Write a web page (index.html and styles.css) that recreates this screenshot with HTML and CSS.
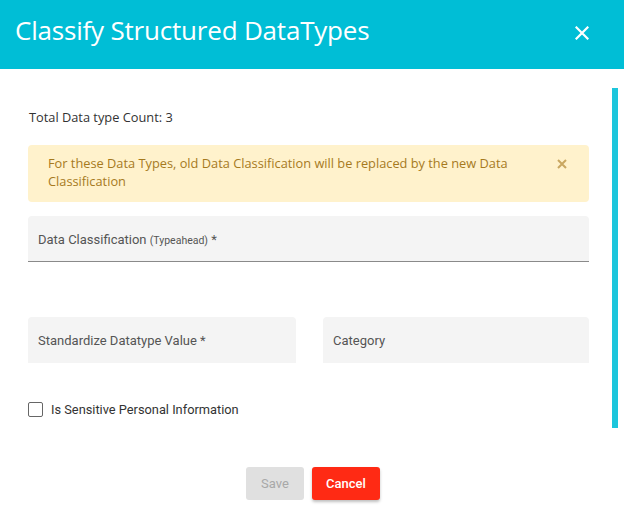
FILE: index.html
```html
<!DOCTYPE html>
<html>
<head>
<meta charset="utf-8">
<link rel="stylesheet" href="styles.css">
</head>
<body>
<div class="dialog">
  <header class="header">
    <h1 class="title">Classify Structured DataTypes</h1>
    <svg class="close" width="14" height="14" viewBox="0 0 14 14"><path d="M1.5 1.5L12.5 12.5M12.5 1.5L1.5 12.5" stroke="#fff" stroke-width="2.2" stroke-linecap="square"/></svg>
  </header>
  <main class="body">
    <div class="scrollbar"></div>
    <p class="count">Total Data type Count: 3</p>
    <div class="alert">
      <span class="alert-text">For these Data Types, old Data Classification will be replaced by the new Data Classification</span>
      <svg class="alert-close" width="10" height="10" viewBox="0 0 10 10"><path d="M1 1L9 9M9 1L1 9" stroke="#c9a760" stroke-width="2"/></svg>
    </div>
    <div class="field field-underline">
      <span class="label">Data Classification <small>(Typeahead)</small> *</span>
    </div>
    <div class="row">
      <div class="field"><span class="label">Standardize Datatype Value *</span></div>
      <div class="field"><span class="label">Category</span></div>
    </div>
    <label class="check">
      <span class="box"></span>
      <span class="check-label">Is Sensitive Personal Information</span>
    </label>
    <div class="actions">
      <button class="btn btn-save">Save</button>
      <button class="btn btn-cancel">Cancel</button>
    </div>
  </main>
</div>
</body>
</html>
```
FILE: styles.css
```css
html, body {
  margin: 0;
  padding: 0;
  background: #fff;
}
.dialog {
  width: 624px;
  height: 514px;
  display: flex;
  flex-direction: column;
  font-family: "Open Sans", sans-serif;
  overflow: hidden;
}
.header {
  height: 69px;
  background: #00bed6;
  display: flex;
  align-items: center;
  justify-content: space-between;
  padding: 0 35px 0 15px;
  box-sizing: border-box;
  flex-shrink: 0;
}
.title {
  margin: 0;
  margin-top: -10px;
  font-family: "Open Sans", sans-serif;
  font-weight: 400;
  font-size: 26px;
  color: #fff;
  letter-spacing: -0.2px;
}
.close {
  margin-top: -3px;
}
.body {
  position: relative;
  flex: 1;
  padding: 39px 35px 0 28px;
  display: flex;
  flex-direction: column;
}
.scrollbar {
  position: absolute;
  left: 612px;
  top: 19px;
  width: 6px;
  height: 340px;
  background: #1cc6dc;
}
.count {
  margin: 0 0 0 1px;
  font-size: 12.8px;
  line-height: 18px;
  color: #333;
}
.alert {
  margin-top: 19px;
  height: 57px;
  box-sizing: border-box;
  background: #fff2cc;
  border-radius: 4px;
  display: flex;
  align-items: center;
  padding: 0 22px 3px 20px;
  gap: 30px;
}
.alert-text {
  flex: 1;
  font-size: 12.8px;
  line-height: 18px;
  color: #a67a1e;
}
.alert-close {
  margin-top: -16px;
}
.field {
  height: 46px;
  background: #f4f4f4;
  border-radius: 4px 4px 0 0;
  display: flex;
  align-items: center;
  padding: 0 10px;
  box-sizing: border-box;
}
.field-underline {
  margin-top: 14px;
  border-bottom: 1px solid #8a8a8a;
  padding-top: 2px;
}
.label {
  font-family: Roboto, sans-serif;
  font-size: 13px;
  color: #555;
}
.label small {
  font-size: 10.5px;
}
.row {
  margin-top: 55px;
  display: grid;
  grid-template-columns: 268px 266px;
  justify-content: space-between;
}
.check {
  margin-top: 39px;
  display: flex;
  align-items: center;
  gap: 8px;
}
.box {
  width: 15px;
  height: 15px;
  box-sizing: border-box;
  border: 1.6px solid #666;
  border-radius: 2px;
}
.check-label {
  font-family: Roboto, sans-serif;
  font-size: 12.8px;
  color: #333;
}
.actions {
  margin-top: 50px;
  display: flex;
  justify-content: center;
  gap: 8px;
  padding-left: 9px;
}
.btn {
  height: 33px;
  border: none;
  border-radius: 3px;
  font-family: Roboto, sans-serif;
  font-size: 13px;
}
.btn-save {
  width: 58px;
  background: #e0e0e0;
  color: #a8a8a8;
}
.btn-cancel {
  width: 68px;
  background: #ff2a14;
  color: #fff;
  font-weight: 500;
  box-shadow: 0 2px 3px rgba(0,0,0,0.25);
}
```
